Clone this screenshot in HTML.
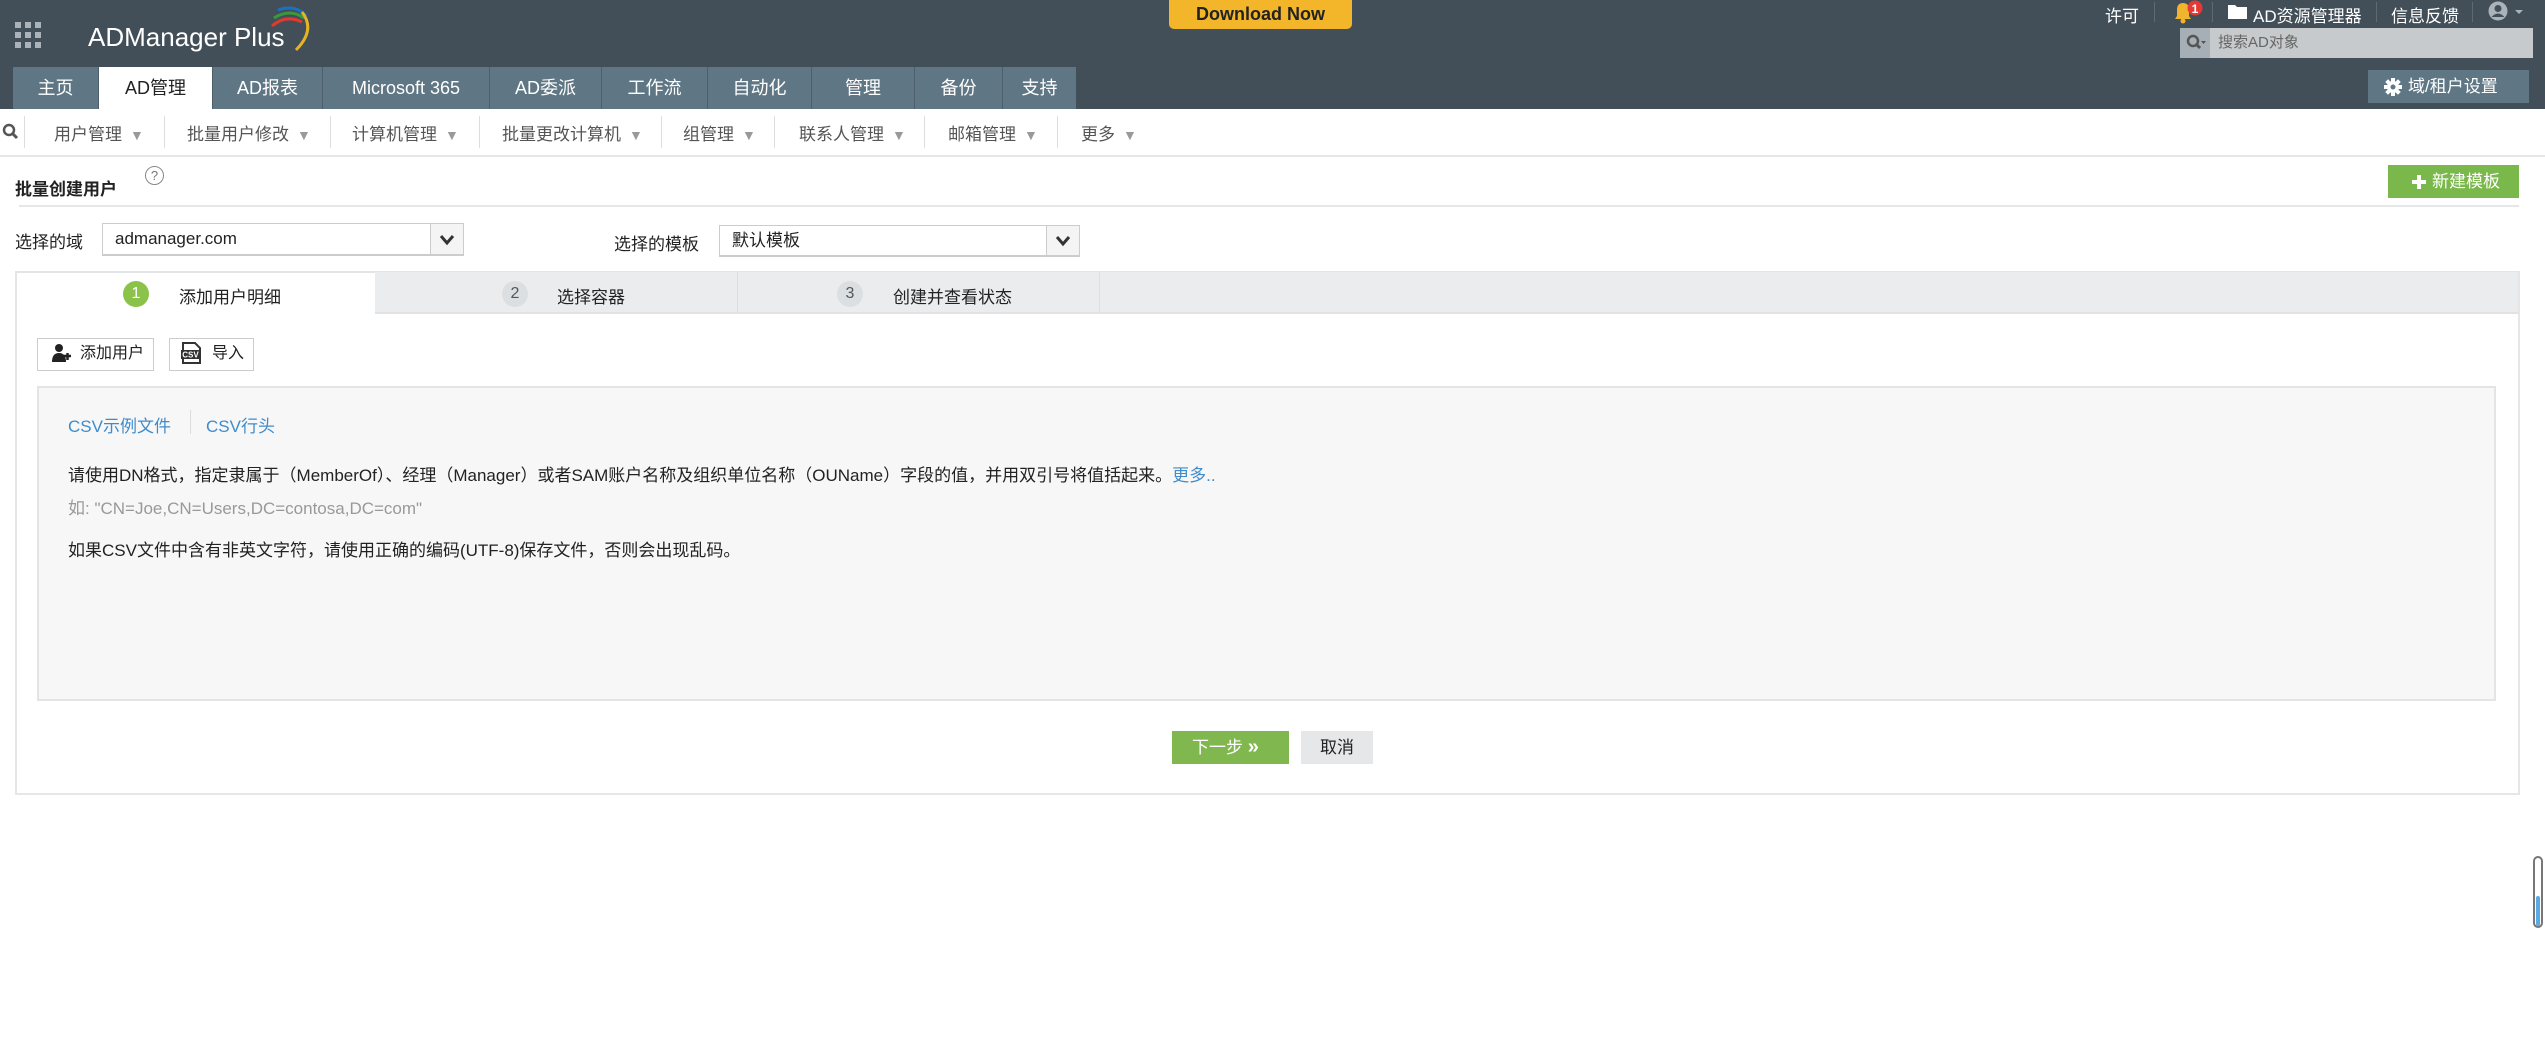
<!DOCTYPE html>
<html><head><meta charset="utf-8"><style>
*{box-sizing:border-box;margin:0;padding:0}
body{width:2545px;height:1063px;overflow:hidden;background:#fff;font-family:"Liberation Sans","Noto Sans CJK SC",sans-serif;font-size:17px;color:#222;position:relative}
.a{position:absolute}
.hdr{left:0;top:0;width:2545px;height:109px;background:#434f58}
.tab{top:67px;height:42px;background:#5f7684;color:#fff;font-size:18px;line-height:42px;text-align:center;border-right:1px solid #4d5f6a}
.tab.on{background:#fff;color:#222}
.sub{top:120px;font-size:17px;color:#555}
.sub i{font-style:normal;font-size:14px;color:#999;margin-left:8px}
.sep{top:116px;width:1px;height:32px;background:#ddd}
.wt{color:#fff;font-size:17px}
.step{top:272px;height:41px;background:#eaeced;border-right:1px solid #dcdfe0}
.circ{width:26px;height:26px;border-radius:13px;background:#dcdfe1;color:#555;text-align:center;line-height:26px;font-size:16px}
.btn{border:1px solid #ccc;background:#fff;font-size:16px;line-height:30px;padding-left:10px}
</style></head><body>
<div class="a hdr"></div>
<svg class="a" style="left:15px;top:22px" width="28" height="28"><g fill="#aab3b9"><rect x="0" y="0" width="6" height="6"/><rect x="10" y="0" width="6" height="6"/><rect x="20" y="0" width="6" height="6"/><rect x="0" y="10" width="6" height="6"/><rect x="10" y="10" width="6" height="6"/><rect x="20" y="10" width="6" height="6"/><rect x="0" y="20" width="6" height="6"/><rect x="10" y="20" width="6" height="6"/><rect x="20" y="20" width="6" height="6"/></g></svg>
<div class="a" style="left:88px;top:22px;color:#fff;font-size:26px">ADManager Plus</div>
<svg class="a" style="left:266px;top:4px" width="50" height="48"><path d="M6 22 Q20 10 36 18" stroke="#e03a2f" stroke-width="3" fill="none"/><path d="M8 14 Q24 4 38 14" stroke="#3a9a3a" stroke-width="3" fill="none"/><path d="M12 6 Q30 0 40 12" stroke="#1d6fc0" stroke-width="3" fill="none"/><path d="M36 8 Q50 26 30 46" stroke="#e6b325" stroke-width="3" fill="none"/></svg>
<div class="a" style="left:1169px;top:0;width:183px;height:29px;background:#f3b62b;border-radius:0 0 5px 5px;text-align:center;font-weight:bold;font-size:18px;line-height:28px;color:#222">Download Now</div>
<div class="a wt" style="left:2105px;top:2px">许可</div>
<div class="a" style="left:2154px;top:2px;width:1px;height:20px;background:#5c6a73"></div>
<svg class="a" style="left:2172px;top:0" width="36" height="24"><path d="M3 19 L5 16 V10 Q5 3 11 3 Q17 3 17 10 V16 L19 19 Z" fill="#f0b52d"/><circle cx="11" cy="21" r="2.5" fill="#f0b52d"/><circle cx="23" cy="8" r="7.5" fill="#e53935"/><text x="23" y="13" font-size="12" font-weight="bold" fill="#fff" text-anchor="middle" font-family="Liberation Sans">1</text></svg>
<div class="a" style="left:2212px;top:2px;width:1px;height:20px;background:#5c6a73"></div>
<svg class="a" style="left:2228px;top:5px" width="20" height="14"><path d="M0 0 H7 L9 2 H19 V14 H0 Z" fill="#fff"/></svg>
<div class="a wt" style="left:2253px;top:2px">AD资源管理器</div>
<div class="a" style="left:2376px;top:2px;width:1px;height:20px;background:#5c6a73"></div>
<div class="a wt" style="left:2391px;top:2px">信息反馈</div>
<div class="a" style="left:2472px;top:2px;width:1px;height:20px;background:#5c6a73"></div>
<svg class="a" style="left:2488px;top:1px" width="42" height="22"><circle cx="10" cy="10" r="9.5" fill="#aab3b9"/><circle cx="10" cy="7.5" r="3.5" fill="#434f58"/><path d="M3.5 16 Q10 9 16.5 16 Z" fill="#434f58"/><path d="M27 9 H35 L31 13 Z" fill="#aab3b9"/></svg>
<div class="a" style="left:2180px;top:28px;width:30px;height:30px;background:#a6afb5"></div>
<svg class="a" style="left:2186px;top:34px" width="22" height="18"><circle cx="7" cy="7" r="5" stroke="#555" stroke-width="2.5" fill="none"/><path d="M10.5 10.5 L14 14" stroke="#555" stroke-width="3"/><path d="M15 7 H20 L17.5 10 Z" fill="#555"/></svg>
<div class="a" style="left:2210px;top:28px;width:323px;height:30px;background:#c6cacc;color:#666;font-size:15px;line-height:30px;padding-left:8px">搜索AD对象</div>
<div class="a" style="left:2368px;top:70px;width:161px;height:33px;background:#5f7684;color:#fff;font-size:17px;line-height:33px;padding-left:40px">域/租户设置</div>
<svg class="a" style="left:2384px;top:78px" width="18" height="18"><g fill="#fff"><circle cx="9" cy="9" r="6"/><rect x="7" y="0" width="4" height="18"/><rect x="0" y="7" width="18" height="4"/><rect x="7" y="0" width="4" height="18" transform="rotate(45 9 9)"/><rect x="7" y="0" width="4" height="18" transform="rotate(-45 9 9)"/></g><circle cx="9" cy="9" r="2.5" fill="#5f7684"/></svg>
<div class="a tab" style="left:13px;width:86px">主页</div>
<div class="a tab on" style="left:99px;width:114px">AD管理</div>
<div class="a tab" style="left:213px;width:110px">AD报表</div>
<div class="a tab" style="left:323px;width:167px">Microsoft 365</div>
<div class="a tab" style="left:490px;width:112px">AD委派</div>
<div class="a tab" style="left:602px;width:106px">工作流</div>
<div class="a tab" style="left:708px;width:104px">自动化</div>
<div class="a tab" style="left:812px;width:103px">管理</div>
<div class="a tab" style="left:915px;width:88px">备份</div>
<div class="a tab" style="left:1003px;width:73px;border-right:none">支持</div>
<svg class="a" style="left:2px;top:123px" width="20" height="18"><circle cx="7" cy="7" r="5" stroke="#555" stroke-width="2.5" fill="none"/><path d="M10.5 10.5 L15 15" stroke="#555" stroke-width="3"/></svg>
<div class="a sep" style="left:24px"></div>
<div class="a sub" style="left:54px">用户管理<i>▼</i></div>
<div class="a sep" style="left:164px"></div>
<div class="a sub" style="left:187px">批量用户修改<i>▼</i></div>
<div class="a sep" style="left:330px"></div>
<div class="a sub" style="left:352px">计算机管理<i>▼</i></div>
<div class="a sep" style="left:479px"></div>
<div class="a sub" style="left:502px">批量更改计算机<i>▼</i></div>
<div class="a sep" style="left:661px"></div>
<div class="a sub" style="left:683px">组管理<i>▼</i></div>
<div class="a sep" style="left:774px"></div>
<div class="a sub" style="left:799px">联系人管理<i>▼</i></div>
<div class="a sep" style="left:924px"></div>
<div class="a sub" style="left:948px">邮箱管理<i>▼</i></div>
<div class="a sep" style="left:1057px"></div>
<div class="a sub" style="left:1081px">更多<i>▼</i></div>
<div class="a" style="left:0;top:155px;width:2545px;height:2px;background:#e6e6e6"></div>
<div class="a" style="left:15px;top:175px;font-weight:bold;font-size:17px">批量创建用户</div>
<div class="a" style="left:145px;top:166px;width:19px;height:19px;border:1px solid #888;border-radius:10px;font-size:13px;color:#777;text-align:center;line-height:17px">?</div>
<div class="a" style="left:2388px;top:165px;width:131px;height:33px;background:#7ab84c;color:#fff;font-size:17px;line-height:33px;padding-left:44px">新建模板</div>
<div class="a" style="left:2412px;top:175px;width:14px;height:14px"><div class="a" style="left:5px;top:0;width:4px;height:14px;background:#fff"></div><div class="a" style="left:0;top:5px;width:14px;height:4px;background:#fff"></div></div>
<div class="a" style="left:19px;top:205px;width:2500px;height:2px;background:#e6e6e6"></div>
<div class="a" style="left:15px;top:228px">选择的域</div>
<div class="a" style="left:102px;top:223px;width:362px;height:33px;border:1px solid #ccc;border-bottom:2px solid #ccc;font-size:17px;line-height:30px;padding-left:12px">admanager.com</div>
<div class="a" style="left:430px;top:224px;width:33px;height:30px;border-left:1px solid #ccc;background:#f4f4f4"></div>
<svg class="a" style="left:439px;top:234px" width="16" height="12"><path d="M2 2 L8 9 L14 2" stroke="#333" stroke-width="3" fill="none"/></svg>
<div class="a" style="left:614px;top:230px">选择的模板</div>
<div class="a" style="left:719px;top:225px;width:361px;height:32px;border:1px solid #ccc;border-bottom:2px solid #ccc;line-height:30px;padding-left:12px">默认模板</div>
<div class="a" style="left:1046px;top:226px;width:33px;height:29px;border-left:1px solid #ccc;background:#f4f4f4"></div>
<svg class="a" style="left:1055px;top:235px" width="16" height="12"><path d="M2 2 L8 9 L14 2" stroke="#333" stroke-width="3" fill="none"/></svg>
<div class="a" style="left:15px;top:271px;width:2505px;height:524px;border:2px solid #e6e6e6;border-top:2px solid #e2e4e5"></div>
<div class="a step" style="left:375px;width:363px"></div>
<div class="a step" style="left:738px;width:362px"></div>
<div class="a" style="left:1100px;top:272px;width:1418px;height:41px;background:#eaeced"></div>
<div class="a" style="left:375px;top:312px;width:2143px;height:2px;background:#e0e2e3"></div>
<div class="a circ" style="left:123px;top:281px;background:#8bc34a;color:#fff">1</div>
<div class="a" style="left:179px;top:283px;font-size:17px">添加用户明细</div>
<div class="a circ" style="left:502px;top:281px">2</div>
<div class="a" style="left:557px;top:283px">选择容器</div>
<div class="a circ" style="left:837px;top:281px">3</div>
<div class="a" style="left:893px;top:283px">创建并查看状态</div>
<div class="a btn" style="left:37px;top:338px;width:117px;height:33px;padding-left:42px">添加用户</div>
<svg class="a" style="left:50px;top:343px" width="22" height="22"><circle cx="9" cy="5" r="4" fill="#222"/><path d="M2 19 Q2 10 9 10 Q16 10 16 19 Z" fill="#222"/><path d="M14 13 H21 M17.5 10 V17" stroke="#222" stroke-width="2.5"/></svg>
<div class="a btn" style="left:169px;top:338px;width:85px;height:33px;padding-left:42px">导入</div>
<svg class="a" style="left:180px;top:342px" width="22" height="22"><path d="M3 1 H15 L20 6 V21 H3 Z" fill="#fff" stroke="#333" stroke-width="2"/><rect x="1" y="8" width="19" height="9" fill="#333"/><text x="10.5" y="15.5" font-size="8" fill="#fff" text-anchor="middle" font-family="Liberation Sans" font-weight="bold">CSV</text></svg>
<div class="a" style="left:37px;top:386px;width:2459px;height:315px;background:#f7f7f7;border:2px solid #e4e4e4"></div>
<div class="a" style="left:68px;top:412px;color:#3f8ccc">CSV示例文件</div>
<div class="a" style="left:190px;top:410px;width:1px;height:24px;background:#ddd"></div>
<div class="a" style="left:206px;top:412px;color:#3f8ccc">CSV行头</div>
<div class="a" style="left:68px;top:461px">请使用DN格式，指定隶属于（MemberOf）、经理（Manager）或者SAM账户名称及组织单位名称（OUName）字段的值，并用双引号将值括起来。<span style="color:#3f8ccc">更多..</span></div>
<div class="a" style="left:68px;top:494px;color:#999">如: "CN=Joe,CN=Users,DC=contosa,DC=com"</div>
<div class="a" style="left:68px;top:536px">如果CSV文件中含有非英文字符，请使用正确的编码(UTF-8)保存文件，否则会出现乱码。</div>
<div class="a" style="left:1172px;top:731px;width:117px;height:33px;background:#80b84f;color:#fff;line-height:33px;padding-left:20px">下一步 <b style="font-size:20px">»</b></div>
<div class="a" style="left:1301px;top:731px;width:72px;height:33px;background:#e6e7e8;line-height:33px;text-align:center">取消</div>
<div class="a" style="left:2533px;top:856px;width:10px;height:72px;border:2px solid #777;border-radius:5px;background:#fff"></div>
<div class="a" style="left:2536px;top:896px;width:4px;height:30px;background:#5aaae6;border-radius:2px"></div>
</body></html>
